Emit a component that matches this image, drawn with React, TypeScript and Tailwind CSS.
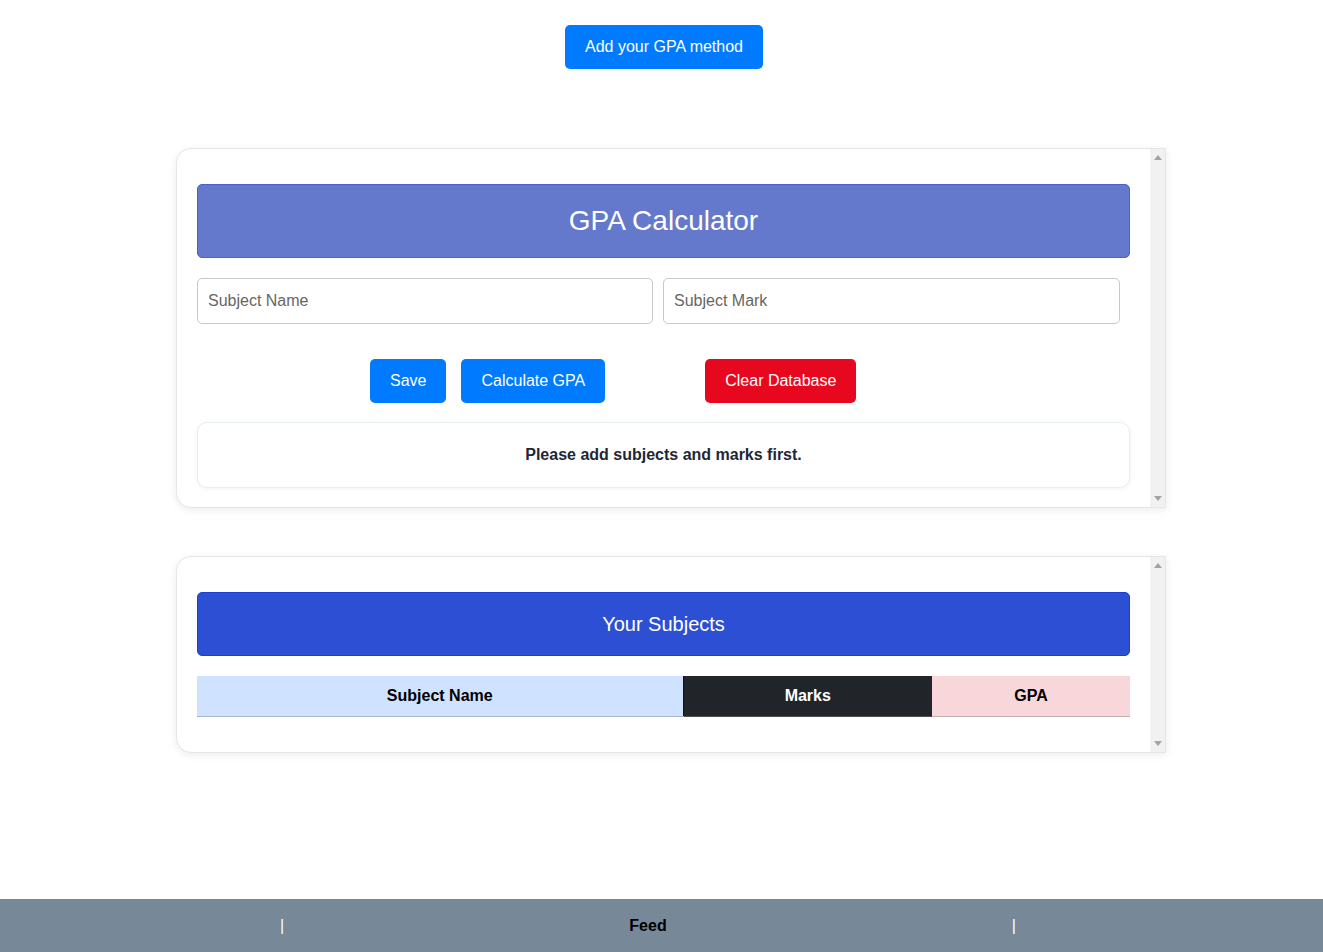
import React from "react";

const font = { fontFamily: '"Liberation Sans", Arial, sans-serif' };

function Track() {
  // fake scroll track, drawn at the card's right edge
  return (
    <div className="w-[15px] bg-[#f1f1f1] flex flex-col items-center justify-between py-[6px] rounded-none">
      <svg width="8" height="5" viewBox="0 0 8 5">
        <polygon points="4,0 8,5 0,5" fill="#a3a3a3" />
      </svg>
      <svg width="8" height="5" viewBox="0 0 8 5">
        <polygon points="0,0 8,0 4,5" fill="#a3a3a3" />
      </svg>
    </div>
  );
}

function Card({ children }: { children: React.ReactNode }) {
  return (
    <div className="ml-[176px] w-[990px] flex bg-white border border-[#e6e6e6] rounded-l-[15px] shadow-[0_2px_8px_rgba(0,0,0,0.08)]">
      <div className="flex-1 px-5 pt-[35px] pb-[19px]">{children}</div>
      <Track />
    </div>
  );
}

export default function App() {
  return (
    <div className="min-h-screen flex flex-col bg-white text-[16px]" style={font}>
      <div className="flex justify-center pt-[25px] pl-[5px]">
        <button className="h-[44px] px-5 bg-[#007bff] text-white rounded-[5px]">
          Add your GPA method
        </button>
      </div>

      <div className="mt-[79px]">
        <Card>
          <div className="h-[74px] flex items-center justify-center bg-[#6479cb] border border-[#4a63c9] rounded-[5px] text-white text-[28px]">
            GPA Calculator
          </div>
          <div className="mt-5 flex gap-[10px]">
            <input
              className="w-[456px] h-[46px] px-[10px] border border-[#c8c8c8] rounded-[5px] placeholder:text-[#666] outline-none"
              placeholder="Subject Name"
            />
            <input
              className="w-[457px] h-[46px] px-[10px] border border-[#c8c8c8] rounded-[5px] placeholder:text-[#666] outline-none"
              placeholder="Subject Mark"
            />
          </div>
          <div className="mt-[35px] ml-[173px] flex">
            <button className="h-[44px] px-5 bg-[#007bff] text-white rounded-[5px]">Save</button>
            <button className="ml-[15px] h-[44px] px-5 bg-[#007bff] text-white rounded-[5px]">
              Calculate GPA
            </button>
            <button className="ml-[100px] h-[44px] px-5 bg-[#e7081f] text-white rounded-[5px]">
              Clear Database
            </button>
          </div>
          <div className="mt-[19px] h-[66px] flex items-center justify-center border border-[#e8ecf3] rounded-[10px] shadow-[0_1px_4px_rgba(120,140,180,0.12)] font-bold text-[#1e2736]">
            Please add subjects and marks first.
          </div>
        </Card>

        <div className="mt-[48px]">
          <Card>
            <div className="h-[64px] flex items-center justify-center bg-[#2c4fd4] border border-[#1d3fd0] rounded-[5px] text-white text-[20px]">
              Your Subjects
            </div>
            <table className="mt-5 mb-4 w-full table-fixed border-collapse">
              <thead>
                <tr className="h-[40px] font-bold">
                  <th className="w-[486px] bg-[#cfe2ff] text-black border-b border-[#a6b5cc]">Subject Name</th>
                  <th className="w-[249px] bg-[#212529] text-white border-b border-l border-[#4d5154] border-l-[#111]">Marks</th>
                  <th className="bg-[#f8d7da] text-black border-b border-[#c6acae]">GPA</th>
                </tr>
              </thead>
            </table>
          </Card>
        </div>
      </div>

      <footer className="mt-auto h-[53px] bg-[#778899] flex items-center">
        <div className="ml-[280px] w-[736px] flex items-center justify-between font-bold">
          <span className="text-white font-normal">|</span>
          <span className="text-black">Feed</span>
          <span className="text-white font-normal">|</span>
        </div>
      </footer>
    </div>
  );
}
